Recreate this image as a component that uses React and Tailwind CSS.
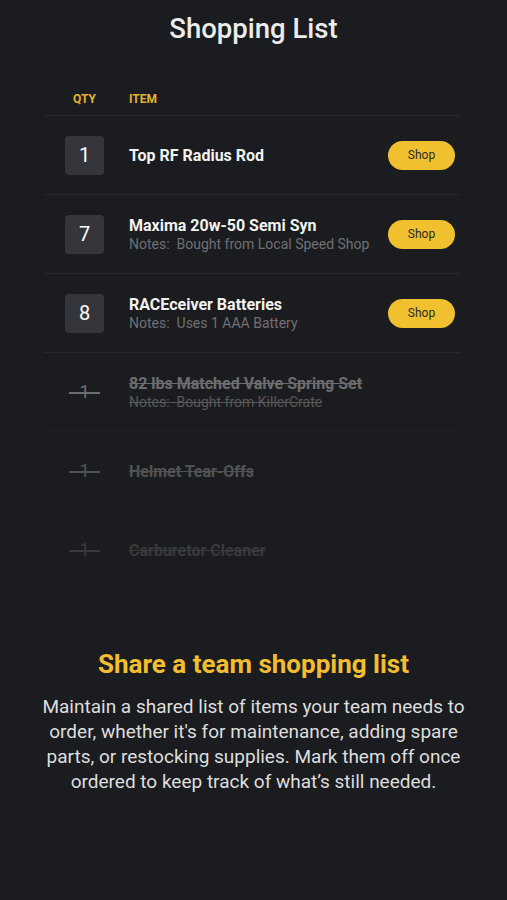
import React from 'react';

const active = [
  { qty: 1, title: 'Top RF Radius Rod' },
  { qty: 7, title: 'Maxima 20w-50 Semi Syn', notes: 'Bought from Local Speed Shop' },
  { qty: 8, title: 'RACEceiver Batteries', notes: 'Uses 1 AAA Battery' },
];

const done = [
  { qty: 1, title: '82 lbs Matched Valve Spring Set', notes: 'Bought from KillerCrate', fade: 'opacity-45' },
  { qty: 1, title: 'Helmet Tear-Offs', fade: 'opacity-30' },
  { qty: 1, title: 'Carburetor Cleaner', fade: 'opacity-[0.16]' },
];

const ActiveRow = ({ item }) => (
  <div className="h-[79px] flex items-center border-b border-[#26272b] pl-[21px] pr-[6px]">
    <div className="w-[39px] h-[39px] rounded-[4px] bg-[#35363b] flex items-center justify-center text-[20px] text-white">
      {item.qty}
    </div>
    <div className="flex-1 ml-[25px] flex flex-col">
      <span className="text-[16px] leading-[19px] font-bold text-[#f2f2f2]">{item.title}</span>
      {item.notes && (
        <span className="text-[14px] leading-[18px] text-[#6e7075]">Notes:&nbsp; {item.notes}</span>
      )}
    </div>
    <button className="w-[67px] h-[29px] rounded-full bg-[#f0c02f] text-[12px] text-[#2a2a2a]">
      Shop
    </button>
  </div>
);

const DoneRow = ({ item }) => (
  <div className={`h-[79px] flex items-center border-b border-[#26272b] pl-[21px] pr-[6px] ${item.fade}`}>
    <div className="w-[39px] flex items-center justify-center">
      <span className="relative text-[19px] text-[#cfcfcf] px-[10px]">
        {item.qty}
        <span className="absolute left-0 right-0 top-1/2 h-[2px] bg-[#cfcfcf]" />
      </span>
    </div>
    <div className="flex-1 ml-[25px] flex flex-col">
      <span className="text-[16px] leading-[19px] font-bold text-[#cfcfcf] line-through">{item.title}</span>
      {item.notes && (
        <span className="text-[14px] leading-[18px] text-[#a0a0a0] line-through">Notes:&nbsp; {item.notes}</span>
      )}
    </div>
  </div>
);

export default function App() {
  return (
    <div className="min-h-[900px] w-full bg-[#1b1c1f] font-['Roboto','Noto_Sans',sans-serif]">
      <div className="pt-[12px] text-center">
        <h1 className="text-[27.5px] leading-[34px] font-medium text-[#ececec]">Shopping List</h1>
      </div>

      <div className="ml-[44px] mr-[46px] mt-[36px]">
        <div className="h-[34px] flex items-center border-b border-[#26272b] text-[12px] font-bold text-[#e3b22d]">
          <span className="w-[39px] ml-[21px] text-center">QTY</span>
          <span className="ml-[25px]">ITEM</span>
        </div>
        {active.map((item) => (
          <ActiveRow key={item.title} item={item} />
        ))}
        {done.map((item) => (
          <DoneRow key={item.title} item={item} />
        ))}
      </div>

      <div className="mt-[58px] px-[33px] text-center">
        <h2 className="text-[26px] leading-[32px] font-bold text-[#f2be2f]">Share a team shopping list</h2>
        <p className="mt-[14px] text-[19px] leading-[25px] text-[#dedede]">
          Maintain a shared list of items your team needs to order, whether it's for maintenance, adding spare
          parts, or restocking supplies. Mark them off once ordered to keep track of what’s still needed.
        </p>
      </div>
    </div>
  );
}
